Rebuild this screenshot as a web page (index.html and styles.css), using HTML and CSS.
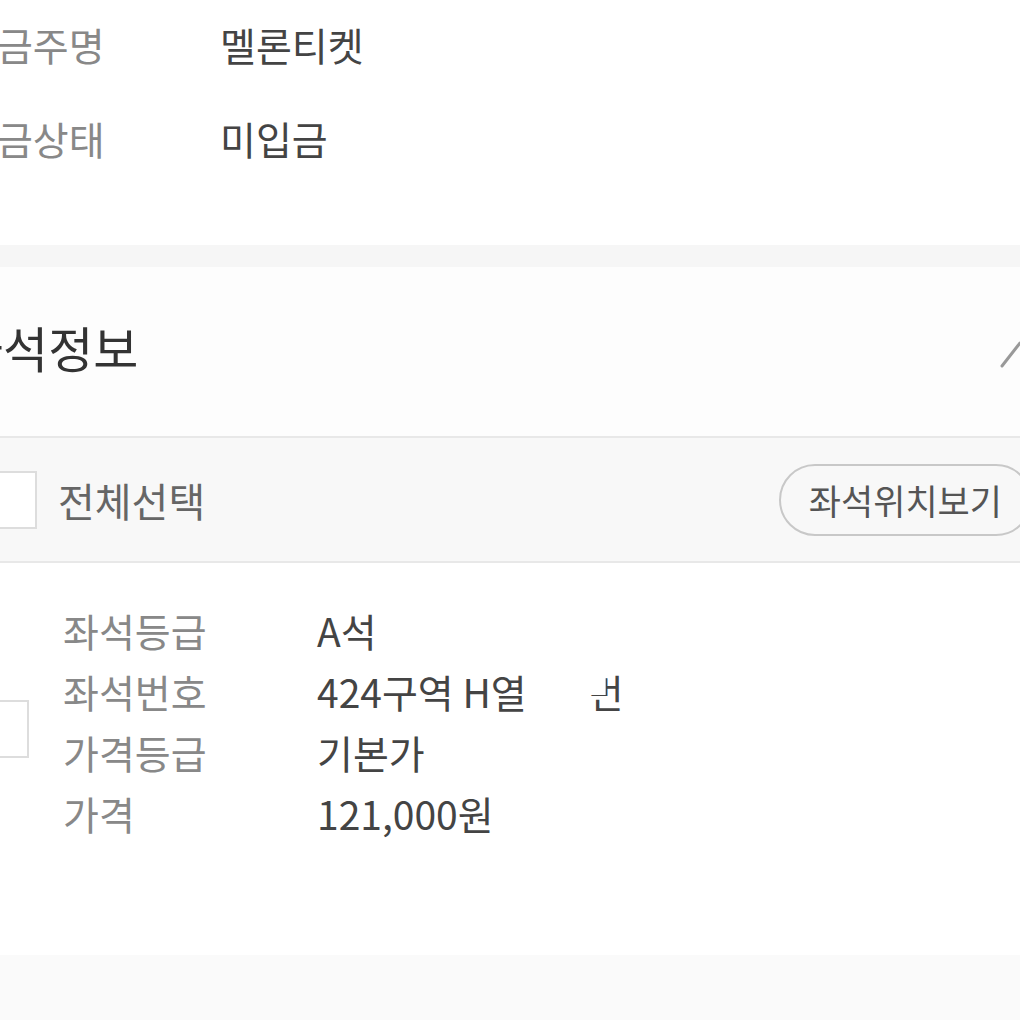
FILE: index.html
```html
<!DOCTYPE html>
<html>
<head>
    <title>예매 상세</title>
    <link rel="stylesheet" href="styles.css">
</head>
<body>
    <div class="page">
        <div class="info">
            <div class="info-row">
                <span class="info-label">입금주명</span>
                <span class="info-value">멜론티켓</span>
            </div>
            <div class="info-row">
                <span class="info-label">입금상태</span>
                <span class="info-value">미입금</span>
            </div>
        </div>

        <div class="band"></div>

        <div class="section-head">
            <h2 class="section-title">좌석정보</h2>
            <svg class="chevron" width="40" height="34" viewBox="0 0 40 34">
                <polyline points="2,31 20,8 38,31" fill="none" stroke="#999" stroke-width="3" stroke-linecap="round" stroke-linejoin="round"/>
            </svg>
        </div>

        <div class="select-row">
            <label class="select-all"><span class="box"></span>전체선택</label>
            <button class="seat-map">좌석위치보기</button>
        </div>

        <div class="seat">
            <span class="box seat-box"></span>
            <div class="seat-table">
                <div class="seat-row">
                    <span class="seat-label">좌석등급</span>
                    <span class="seat-value">A석</span>
                </div>
                <div class="seat-row">
                    <span class="seat-label">좌석번호</span>
                    <span class="seat-value">424구역 H열<span class="hidden-part">번</span></span>
                </div>
                <div class="seat-row">
                    <span class="seat-label">가격등급</span>
                    <span class="seat-value">기본가</span>
                </div>
                <div class="seat-row">
                    <span class="seat-label">가격</span>
                    <span class="seat-value">121,000원</span>
                </div>
            </div>
        </div>

        <div class="footer"></div>
    </div>
</body>
</html>
```

FILE: styles.css
```css
body {
    margin: 0;
    background-color: #fff;
    font-family: "Noto Sans CJK KR", "Noto Sans", sans-serif;
    overflow: hidden;
    height: 1020px;
}

.page {
    margin-left: -39px;
    margin-right: -30px;
}

.info {
    padding-bottom: 61px;
}

.info-row {
    display: flex;
    align-items: center;
    height: 92px;
    font-size: 39px;
}

.info-row:first-child {
    position: relative;
    top: -2px;
}

.info-label {
    width: 259px;
    color: #888;
}

.info-value {
    color: #444;
}

.band {
    height: 22px;
    background-color: #f6f6f6;
}

.section-head {
    display: flex;
    justify-content: space-between;
    align-items: center;
    height: 169px;
    padding-right: 10px;
    background-color: #fdfdfd;
    border-bottom: 2px solid #e8e8e8;
}

.section-title {
    margin: 0 0 0 -3px;
    font-size: 49px;
    font-weight: normal;
    color: #333;
    position: relative;
    top: -5px;
}

.chevron {
    display: block;
}

.select-row {
    display: flex;
    justify-content: space-between;
    align-items: center;
    height: 123px;
    padding-right: 18px;
    background-color: #f8f8f8;
    border-bottom: 2px solid #e8e8e8;
}

.select-all {
    display: flex;
    align-items: center;
    gap: 21px;
    font-size: 40px;
    color: #666;
    margin-left: 18px;
}

.box {
    display: block;
    width: 54px;
    height: 54px;
    background-color: #fff;
    border: 2px solid #ddd;
    flex-shrink: 0;
}

.seat-map {
    height: 72px;
    padding: 0 28px;
    border: 2px solid #c8c8c8;
    border-radius: 36px;
    background-color: #f8f8f8;
    font-family: inherit;
    font-size: 35px;
    color: #555;
}

.seat {
    display: flex;
    align-items: center;
    height: 392px;
    box-sizing: border-box;
    padding-bottom: 76px;
}

.seat-box {
    margin-left: 10px;
    margin-top: 16px;
}

.seat-table {
    margin-left: 34px;
}

.seat-row {
    display: flex;
    align-items: center;
    height: 61px;
    font-size: 39px;
}

.seat-label {
    width: 254px;
    color: #888;
}

.seat-value {
    color: #444;
    display: flex;
    align-items: center;
}

.hidden-part {
    margin-left: 61px;
    clip-path: polygon(0 58%, 50% 58%, 50% 0, 100% 0, 100% 100%, 0 100%);
}

.footer {
    height: 65px;
    background-color: #fafafa;
}
```
